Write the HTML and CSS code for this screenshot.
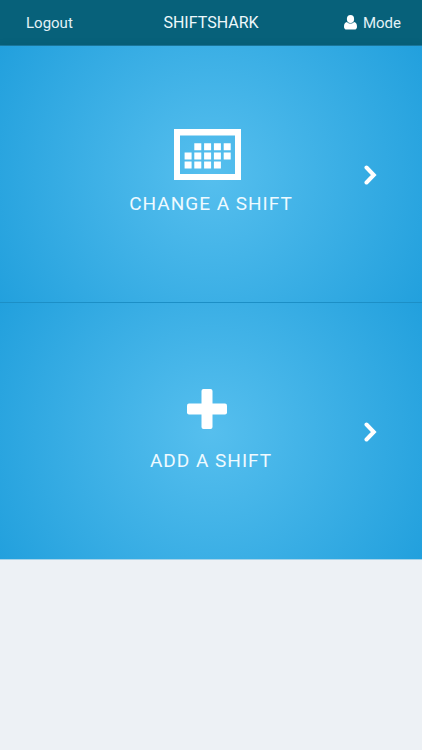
FILE: index.html
```html
<!DOCTYPE html>
<html lang="en">
<head>
<meta charset="utf-8">
<meta name="viewport" content="width=device-width, initial-scale=1">
<title>ShiftShark</title>
<link rel="stylesheet" href="styles.css">
</head>
<body>
<header class="bar">
  <a class="bar-link bar-link-start" href="#logout">Logout</a>
  <h1 class="bar-title">SHIFTSHARK</h1>
  <a class="bar-link bar-link-end" href="#mode">
    <svg class="user-icon" viewBox="0 0 13 15" aria-hidden="true">
      <ellipse cx="6.5" cy="4" rx="3.6" ry="4"/>
      <path d="M3 7C.9 7.200 0 9 0 11.700C0 13.400 1 14.600 2.600 14.600H10.400C12 14.600 13 13.400 13 11.700C13 9 12.100 7.200 10 7C9.100 8 7.900 8.500 6.500 8.500S3.900 8 3 7Z"/>
    </svg>
    Mode
  </a>
</header>
<main class="tiles">
  <a class="tile" href="#change">
    <span class="tile-body">
      <span class="tile-icon">
        <svg width="67" height="51" viewBox="0 0 67 51" aria-hidden="true">
          <path fill-rule="evenodd" d="M0 0H67V51H0ZM6 6.500V45H61V6.500Z"/>
          <path d="M20.300 14.300h7v7h-7zM30.100 14.300h7v7h-7zM39.900 14.300h7v7h-7zM49.700 14.300h7v7h-7zM10.600 23.400h7v7h-7zM20.300 23.400h7v7h-7zM30.100 23.400h7v7h-7zM39.900 23.400h7v7h-7zM49.700 23.400h7v7h-7zM10.600 32.500h7v7h-7zM20.300 32.500h7v7h-7zM30.100 32.500h7v7h-7zM39.900 32.500h7v7h-7z"/>
        </svg>
      </span>
      <span class="tile-label">CHANGE A SHIFT</span>
    </span>
    <svg class="chevron" viewBox="0 0 13 20" aria-hidden="true"><path d="M2.500 2.500L9.800 10L2.500 17.500"/></svg>
  </a>
  <a class="tile" href="#add">
    <span class="tile-body">
      <span class="tile-icon">
        <svg width="40" height="44" viewBox="0 0 40 44" aria-hidden="true">
          <rect x="14.500" y="0" width="11" height="40" rx="2"/>
          <rect x="0" y="14.500" width="40" height="11" rx="2"/>
        </svg>
      </span>
      <span class="tile-label">ADD A SHIFT</span>
    </span>
    <svg class="chevron" viewBox="0 0 13 20" aria-hidden="true"><path d="M2.500 2.500L9.800 10L2.500 17.500"/></svg>
  </a>
</main>
</body>
</html>
```
FILE: styles.css
```css
* {
  box-sizing: border-box;
}

body {
  margin: 0;
  background: #edf1f5;
  color: #fff;
  font-family: Roboto, "Liberation Sans", sans-serif;
}

a {
  color: inherit;
  text-decoration: none;
}

svg {
  fill: #fff;
}

.bar {
  display: grid;
  grid-template-columns: 1fr auto 1fr;
  align-items: center;
  height: 46px;
  padding: 0 21px;
  background: #07617a;
  border-bottom: 1px solid #1b7ba0;
}

.bar-link {
  display: flex;
  align-items: center;
  gap: 6px;
  color: #e3f2f7;
  font-size: 15px;
  line-height: 20px;
}

.bar-link-start {
  padding-left: 5px;
}

.bar-link-end {
  justify-content: flex-end;
}

.bar-title {
  margin: 0;
  color: #eef9fc;
  font-size: 16px;
  font-weight: 400;
  line-height: 20px;
}

.user-icon {
  width: 13px;
  height: 15px;
}

.tiles {
  box-shadow: 0 2px 10px rgba(0, 40, 60, 0.16);
}

.tile {
  display: grid;
  grid-template-columns: 1fr auto 1fr;
  align-items: center;
  padding: 80px 45px 78px;
  border-bottom: 1px solid #1c8fc6;
  background: #22a0dd radial-gradient(circle, #56bfee, #22a0dd) border-box;
}

.tile:last-child {
  border-bottom-color: #a5d3ea;
}

.tile-body {
  display: grid;
  grid-column: 2;
  justify-items: center;
  gap: 10px;
  padding-bottom: 8px;
}

.tile-icon {
  display: flex;
  align-items: center;
  height: 56px;
  margin-right: 8px;
}

.tile-label {
  color: #effaff;
  font-size: 19px;
  letter-spacing: 1px;
  line-height: 24px;
}

.chevron {
  width: 13px;
  height: 20px;
  justify-self: end;
  fill: none;
  stroke: #fff;
  stroke-linecap: round;
  stroke-width: 4;
}
```
